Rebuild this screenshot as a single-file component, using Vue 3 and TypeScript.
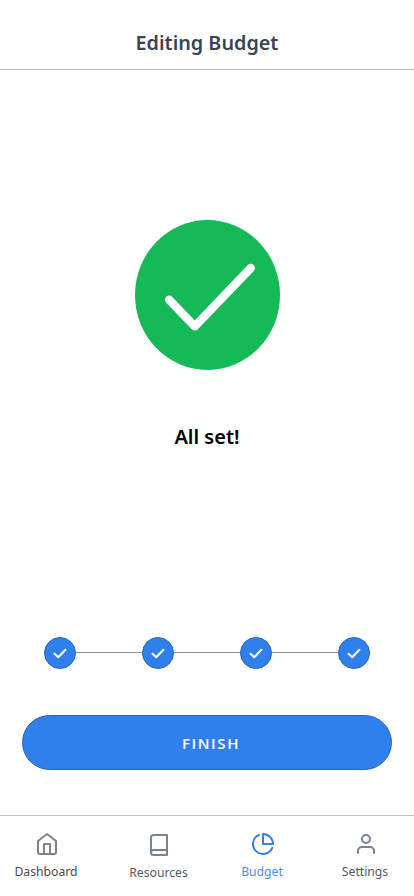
<script setup lang="ts">
interface Tab {
  id: string
  label: string
  paths: string[]
}

const steps: number[] = [1, 2, 3, 4]

const tabs: Tab[] = [
  {
    id: 'dashboard',
    label: 'Dashboard',
    paths: ['M3 9l9-7 9 7v11a2 2 0 0 1-2 2H5a2 2 0 0 1-2-2z', 'M9 22V12h6v10'],
  },
  {
    id: 'resources',
    label: 'Resources',
    paths: ['M4 19.5A2.5 2.5 0 0 1 6.5 17H20', 'M6.5 2H20v20H6.5A2.5 2.5 0 0 1 4 19.5v-15A2.5 2.5 0 0 1 6.5 2z'],
  },
  {
    id: 'budget',
    label: 'Budget',
    paths: ['M21.21 15.89A10 10 0 1 1 8 2.83', 'M22 12A10 10 0 0 0 12 2v10z'],
  },
  {
    id: 'settings',
    label: 'Settings',
    paths: ['M20 21v-2a4 4 0 0 0-4-4H8a4 4 0 0 0-4 4v2', 'M12 3a4 4 0 1 0 0 8a4 4 0 1 0 0-8z'],
  },
]
</script>

<template>
  <div class="screen">
    <header class="header">
      <h1 class="title">Editing Budget</h1>
    </header>

    <main class="content">
      <svg class="success" width="145" height="150" viewBox="0 0 145 150">
        <ellipse cx="72.5" cy="75" rx="72.5" ry="75" fill="#16b957" />
        <path d="M34.2 79.8L59.8 106.4L115.8 48" fill="none" stroke="#fff" stroke-width="8.4" stroke-linecap="round" stroke-linejoin="round" />
      </svg>
      <p class="message">All set!</p>

      <div class="stepper">
        <template v-for="step in steps" :key="step">
          <div v-if="step > 1" class="line"></div>
          <svg class="step" width="32" height="32" viewBox="0 0 32 32">
            <circle cx="16" cy="16" r="15.5" fill="#2f80ed" stroke="#2b69b9" />
            <path d="M10.6 16.8L14.2 20.2L21.4 12.7" fill="none" stroke="#fff" stroke-width="2" stroke-linecap="round" stroke-linejoin="round" />
          </svg>
        </template>
      </div>

      <button class="finish" type="button">FINISH</button>
    </main>

    <nav class="tabs">
      <a v-for="tab in tabs" :key="tab.id" class="tab" :class="tab.id">
        <svg width="24" height="24" viewBox="0 0 24 24" fill="none" stroke-width="2" stroke-linecap="round" stroke-linejoin="round">
          <path v-for="d in tab.paths" :key="d" :d="d" />
        </svg>
        <span class="label">{{ tab.label }}</span>
      </a>
    </nav>
  </div>
</template>

<style scoped>
.screen {
  width: 414px;
  height: 896px;
  display: flex;
  flex-direction: column;
  background: #fff;
  font-family: "Noto Sans", sans-serif;
  overflow: hidden;
}
.header {
  box-sizing: border-box;
  height: 70px;
  padding-top: 30px;
  border-bottom: 1px solid #bdbdbd;
  text-align: center;
}
.title {
  margin: 0;
  font-size: 19.8px;
  line-height: 26px;
  font-weight: 600;
  color: #394452;
}
.content {
  display: flex;
  flex-direction: column;
  align-items: center;
  height: 745px;
  padding-top: 150px;
  box-sizing: border-box;
}
.success {
  display: block;
  flex: none;
  margin-left: 1px;
}
.message {
  margin: 54px 0 0;
  font-size: 20px;
  line-height: 26px;
  font-weight: 600;
  color: #000;
}
.stepper {
  display: flex;
  align-items: center;
  width: 326px;
  margin-top: 187px;
}
.step {
  display: block;
  flex: none;
}
.line {
  flex: 1;
  height: 1px;
  margin-bottom: 1px;
  background: #8b949c;
}
.finish {
  box-sizing: border-box;
  width: 370px;
  height: 55px;
  margin-top: 46px;
  padding: 0 0 0 8px;
  border: 1px solid #2b66b0;
  border-radius: 28px;
  background: #2f80ed;
  color: #fff;
  font-family: "Open Sans", sans-serif;
  font-size: 15px;
  font-weight: 600;
  letter-spacing: 1.6px;
}
.tabs {
  box-sizing: border-box;
  height: 81px;
  border-top: 1px solid #bdbdc7;
  display: grid;
  grid-template-columns: 94px 130px 78px 112px;
}
.tab {
  display: flex;
  flex-direction: column;
  align-items: center;
  padding-top: 16px;
  color: #4f5965;
  stroke: #778391;
}
.tab svg {
  display: block;
}
.label {
  margin: 7px 2px 0 0;
  font-size: 12.2px;
  line-height: 18px;
  stroke: none;
}
.dashboard {
  color: #4a4a4a;
  stroke: #828282;
}
.resources {
  padding-top: 17px;
}
.resources .label {
  margin-right: 1px;
}
.budget {
  color: #4a8ff0;
  stroke: #2f80ed;
}
.settings {
  padding-left: 16px;
}
</style>
